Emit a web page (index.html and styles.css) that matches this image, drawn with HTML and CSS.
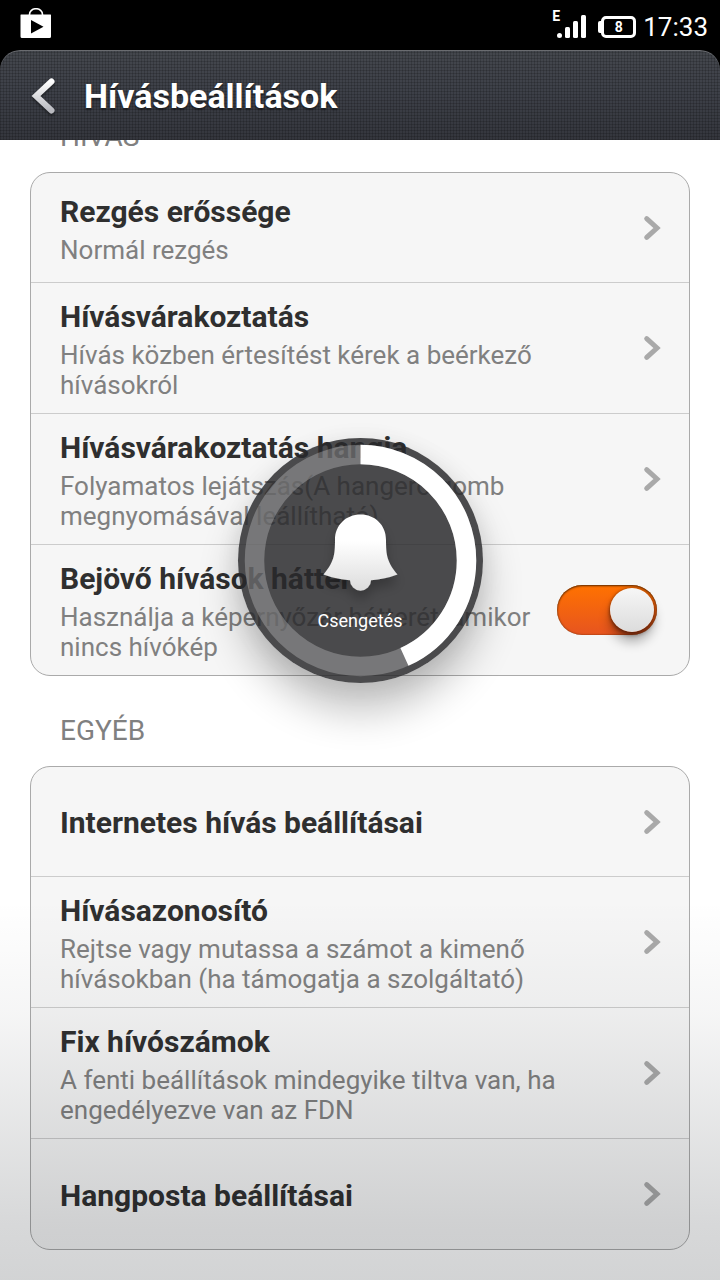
FILE: index.html
```html
<!DOCTYPE html>
<html lang="hu">
<head>
<meta charset="utf-8">
<meta name="viewport" content="width=device-width, initial-scale=1">
<title>Hívásbeállítások</title>
<link rel="stylesheet" href="styles.css">
</head>
<body>
<svg width="0" height="0" class="defs" aria-hidden="true">
  <symbol id="chevron" viewBox="0 0 18 26"><path d="M3.700 3.700 14 13 3.700 22.300" fill="none" stroke="currentColor" stroke-width="5" stroke-linecap="round"/></symbol>
</svg>
<div class="screen">
  <div class="status">
    <svg class="store" width="32" height="32" viewBox="0 0 32 32" aria-hidden="true">
      <path d="M9.500 8V6.500a6.500 5.800 0 0 1 13 0v1.500" fill="none" stroke="#fff" stroke-width="1.600"/>
      <path fill="#fff" fill-rule="evenodd" d="M1 6.500h29.500q.5 0 .5.500V28.500q0 1.500-1.500 1.500H2q-1.500 0-1.500-1.500V7Q.5 6.500 1 6.500ZM11 12v13.500L23.500 18.700Z"/>
    </svg>
    <div class="indicators">
      <div class="signal">
        <span class="network">E</span>
        <svg width="30" height="24" viewBox="0 0 30 24" aria-hidden="true"><g fill="#fff"><rect x="0" y="18" width="5" height="5" rx="2.500"/><rect x="8" y="12" width="5" height="11" rx="1.500"/><rect x="16" y="6" width="5" height="17" rx="1.500"/><rect x="24" y="0" width="5" height="23" rx="1.500"/></g></svg>
      </div>
      <div class="battery">8</div>
      <time class="clock">17:33</time>
    </div>
  </div>
  <header class="header">
    <button class="back" type="button" aria-label="Vissza">
      <svg width="26" height="38" viewBox="0 0 26 38" aria-hidden="true">
        <defs><linearGradient id="arrow" x1="0" y1="0" x2="0" y2="1"><stop offset="0" stop-color="#fff"/><stop offset="1" stop-color="#b9bac0"/></linearGradient></defs>
        <path d="M21.500 4.500 6 19 21.500 33.500" fill="none" stroke="url(#arrow)" stroke-width="6" stroke-linecap="round"/>
      </svg>
    </button>
    <h1 class="heading">Hívásbeállítások</h1>
  </header>
  <main class="content">
    <div class="scroller">
      <h2 class="label">HÍVÁS</h2>
      <div class="card">
        <a class="row" href="#"><span class="text"><span class="title">Rezgés erőssége</span><span class="sub">Normál rezgés</span></span><svg class="chevron" width="18" height="26"><use href="#chevron"/></svg></a>
        <a class="row" href="#"><span class="text"><span class="title">Hívásvárakoztatás</span><span class="sub">Hívás közben értesítést kérek a beérkező hívásokról</span></span><svg class="chevron" width="18" height="26"><use href="#chevron"/></svg></a>
        <a class="row" href="#"><span class="text"><span class="title">Hívásvárakoztatás hangja</span><span class="sub">Folyamatos lejátszás(A hangerő gomb megnyomásával leállítható)</span></span><svg class="chevron" width="18" height="26"><use href="#chevron"/></svg></a>
        <label class="row row-switch"><span class="text"><span class="title">Bejövő hívások háttere</span><span class="sub">Használja a képernyőzár hátterét, amikor nincs hívókép</span></span><input class="switch" type="checkbox" checked></label>
      </div>
      <h2 class="label">EGYÉB</h2>
      <div class="card">
        <a class="row" href="#"><span class="text"><span class="title">Internetes hívás beállításai</span></span><svg class="chevron" width="18" height="26"><use href="#chevron"/></svg></a>
        <a class="row" href="#"><span class="text"><span class="title">Hívásazonosító</span><span class="sub">Rejtse vagy mutassa a számot a kimenő hívásokban (ha támogatja a szolgáltató)</span></span><svg class="chevron" width="18" height="26"><use href="#chevron"/></svg></a>
        <a class="row" href="#"><span class="text"><span class="title">Fix hívószámok</span><span class="sub">A fenti beállítások mindegyike tiltva van, ha engedélyezve van az FDN</span></span><svg class="chevron" width="18" height="26"><use href="#chevron"/></svg></a>
        <a class="row" href="#"><span class="text"><span class="title">Hangposta beállításai</span></span><svg class="chevron" width="18" height="26"><use href="#chevron"/></svg></a>
      </div>
    </div>
  </main>
  <div class="fade"></div>
  <div class="overlay">
    <div class="volume" role="progressbar" aria-label="Csengetés" aria-valuemin="0" aria-valuemax="100" aria-valuenow="43">
      <svg class="dial" viewBox="0 0 245 245" aria-hidden="true">
        <defs>
          <linearGradient id="bell" x1="0" y1="0" x2="0" y2="1"><stop offset="0.350" stop-color="#fff"/><stop offset="1" stop-color="#dcdcdc"/></linearGradient>
          <filter id="drop" x="-30%" y="-30%" width="160%" height="180%"><feDropShadow dx="0" dy="8" stdDeviation="6" flood-color="#000" flood-opacity="0.250"/></filter>
        </defs>
        <circle cx="122.500" cy="122.500" r="106" fill="none" stroke="#fff" stroke-opacity="0.250" stroke-width="19.500"/>
        <circle cx="122.500" cy="122.500" r="106" fill="none" stroke="#fff" stroke-width="19.500" pathLength="360" stroke-dasharray="155.500 360" transform="rotate(-90 122.500 122.500)"/>
        <path filter="url(#drop)" fill="url(#bell)" d="M122.500 76.500C108 76.500 97 87 97 102C97 117 96 124 85.500 136.500Q98 141.300 112 142.200A10.500 10.500 0 0 0 133 142.200Q147 141.300 159.500 136.500C149 124 148 117 148 102C148 87 137 76.500 122.500 76.500Z"/>
      </svg>
      <span class="volume-name">Csengetés</span>
    </div>
  </div>
</div>
</body>
</html>
```

FILE: styles.css
```css
* { box-sizing: border-box; }

body {
  margin: 0;
  background: #000;
  font-family: Roboto, "Noto Sans", sans-serif;
}

.defs { position: absolute; }

.screen {
  position: relative;
  display: flex;
  flex-direction: column;
  min-height: 100vh;
}

/* Status bar */
.status {
  display: flex;
  justify-content: space-between;
  height: 50px;
  padding: 8px 12px 0 20px;
  color: #fff;
}

.indicators {
  display: flex;
  align-items: flex-start;
}

.signal {
  position: relative;
  padding: 7px 0 0 5px;
  margin-right: 11px;
}

.network {
  position: absolute;
  top: 1px;
  left: 0;
  font-size: 14px;
  font-weight: 700;
  line-height: 14px;
}

.battery {
  position: relative;
  width: 35px;
  height: 22px;
  margin: 8px 7px 0 3px;
  border: 3px solid #fff;
  border-radius: 5px;
  font-size: 14px;
  font-weight: 700;
  line-height: 16px;
  text-align: center;
}

.battery::before {
  content: "";
  position: absolute;
  top: 2px;
  left: -6px;
  width: 4px;
  height: 12px;
  border-radius: 2px 0 0 2px;
  background: #fff;
}

.clock {
  font-size: 26px;
  line-height: 38px;
}

/* Title bar */
.header {
  display: flex;
  align-items: center;
  height: 90px;
  padding-left: 12px;
  border-radius: 20px 20px 0 0;
  background:
    repeating-linear-gradient(0deg, rgba(0, 0, 0, .16) 0 1px, transparent 1px 3px),
    repeating-linear-gradient(90deg, rgba(0, 0, 0, .16) 0 1px, transparent 1px 3px),
    linear-gradient(#44474d, #3e4149 40%, #34363d);
  box-shadow: inset 0 1px 0 #6a6c70;
}

.back {
  display: flex;
  justify-content: center;
  width: 62px;
  padding: 2px 0 0;
  border: 0;
  background: none;
}

.back svg { filter: drop-shadow(0 2px 1px rgba(0, 0, 0, .4)); }

.heading {
  margin: 2px 0 0 10px;
  color: #fff;
  font-size: 34px;
  font-weight: 700;
  line-height: 40px;
  text-shadow: 0 2px 2px rgba(0, 0, 0, .5);
}

/* Settings list */
.content {
  flex: 1;
  overflow: hidden;
  background: #fff;
}

.scroller {
  margin-top: -58px;
  padding: 0 30px 30px;
}

.label {
  margin: 0;
  padding: 37px 30px 17px;
  color: #808080;
  font-size: 28px;
  font-weight: 400;
  line-height: 36px;
}

.card {
  border: 1px solid #aaa;
  border-radius: 20px;
  background: #f6f6f6;
}

.row {
  display: flex;
  align-items: center;
  min-height: 109px;
  padding: 0 28px 0 29px;
  color: inherit;
  text-decoration: none;
}

.row + .row {
  min-height: 111px;
  border-top: 1px solid #ccc;
}

.row-switch { padding-right: 32px; }

.text {
  display: flex;
  flex: 1;
  flex-direction: column;
  gap: 5px;
  padding: 16px 24px 13px 0;
}

.title {
  color: #2f2f2f;
  font-size: 30px;
  font-weight: 700;
  line-height: 36px;
}

.sub {
  color: #808080;
  font-size: 26px;
  line-height: 30px;
}

.chevron {
  flex: none;
  color: #a9a9a9;
}

.switch {
  display: flex;
  flex: none;
  align-items: center;
  justify-content: flex-end;
  width: 100px;
  height: 50px;
  margin: 0;
  padding: 0 3px;
  border-radius: 25px;
  appearance: none;
  background: linear-gradient(#ff7200, #e65420);
  box-shadow: inset 0 1px 2px rgba(90, 40, 0, .9), inset 0 0 2px rgba(90, 40, 0, .7);
}

.switch::before {
  content: "";
  width: 44px;
  height: 44px;
  border-radius: 50%;
  background: linear-gradient(#f6f6f6, #dcdcdc);
  box-shadow: 0 0 3px rgba(60, 20, 0, .6), 0 10px 12px rgba(0, 0, 0, .3), 0 3px 4px rgba(60, 20, 0, .5);
}

.fade {
  position: absolute;
  right: 0;
  bottom: 0;
  left: 0;
  height: 380px;
  background: linear-gradient(rgba(8, 14, 20, 0), rgba(8, 14, 20, .04) 30%, rgba(8, 14, 20, .16) 85%, rgba(8, 14, 20, .18));
  pointer-events: none;
}

/* Volume popup */
.overlay {
  position: absolute;
  top: 438px;
  right: 0;
  left: 0;
  display: flex;
  justify-content: center;
  pointer-events: none;
}

.volume {
  display: grid;
  width: 245px;
  height: 245px;
  border-radius: 50%;
  background: rgba(41, 41, 43, .84);
  box-shadow: 0 28px 40px rgba(0, 0, 0, .24), 0 4px 24px rgba(0, 0, 0, .08);
}

.dial, .volume-name { grid-area: 1 / 1; }

.dial {
  width: 245px;
  height: 245px;
}

.volume-name {
  align-self: end;
  padding-bottom: 50px;
  color: #fff;
  font-size: 18px;
  line-height: 24px;
  text-align: center;
}
```
